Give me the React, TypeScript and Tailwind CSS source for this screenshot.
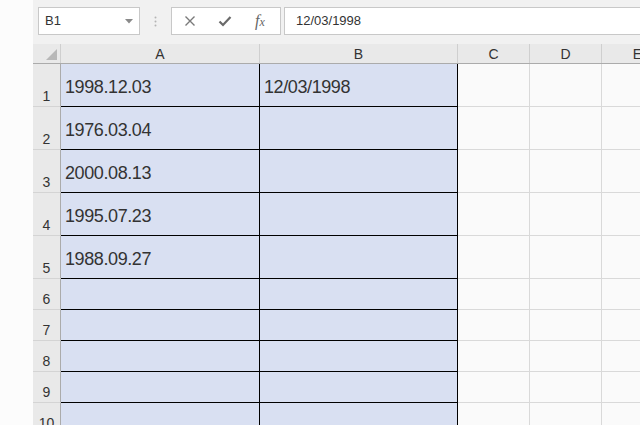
import React from "react";

const rows = [
  { n: 1, h: "h-[43px]", a: "1998.12.03", b: "12/03/1998" },
  { n: 2, h: "h-[43px]", a: "1976.03.04", b: "" },
  { n: 3, h: "h-[43px]", a: "2000.08.13", b: "" },
  { n: 4, h: "h-[43px]", a: "1995.07.23", b: "" },
  { n: 5, h: "h-[43px]", a: "1988.09.27", b: "" },
  { n: 6, h: "h-[31px]", a: "", b: "" },
  { n: 7, h: "h-[31px]", a: "", b: "" },
  { n: 8, h: "h-[31px]", a: "", b: "" },
  { n: 9, h: "h-[31px]", a: "", b: "" },
  { n: 10, h: "h-[31px]", a: "", b: "" },
];

const font = { fontFamily: '"Liberation Sans", Arial, sans-serif' };

export default function App() {
  return (
    <div className="flex w-[640px] h-[425px] overflow-hidden bg-[#fcfcfc]" style={font}>
      {/* left margin */}
      <div className="w-[33px] shrink-0 bg-[#fcfcfc]" />

      <div className="flex flex-col flex-1 min-w-0 bg-[#f1f1f1]">
        {/* Toolbar */}
        <div className="h-[44px] shrink-0 flex items-start pt-[7px] pl-[5px]">
          <div className="w-[102px] h-[28px] bg-white border border-[#c8c8c8] flex items-center justify-between pl-[6px] pr-[6px]">
            <span className="text-[13px] text-[#333]">B1</span>
            <svg width="8" height="5" viewBox="0 0 8 5">
              <path d="M0 0 L8 0 L4 4.5 Z" fill="#8a8a8a" />
            </svg>
          </div>
          <div className="w-[31px] h-[28px] flex items-center justify-center">
            <svg width="3" height="11" viewBox="0 0 3 11">
              <circle cx="1.5" cy="1.5" r="1" fill="#b4b4b4" />
              <circle cx="1.5" cy="5.5" r="1" fill="#b4b4b4" />
              <circle cx="1.5" cy="9.5" r="1" fill="#b4b4b4" />
            </svg>
          </div>
          <div className="w-[110px] h-[28px] bg-white border border-[#c8c8c8] flex items-center pl-[12px] gap-[22px]">
            <svg width="12" height="12" viewBox="0 0 12 12">
              <path d="M1.5 1.5 L10.5 10.5 M10.5 1.5 L1.5 10.5" stroke="#7a7a7a" strokeWidth="1.4" />
            </svg>
            <svg width="14" height="12" viewBox="0 0 14 12">
              <path d="M1.5 6.5 L5 10 L12.5 2" stroke="#6a6a6a" strokeWidth="2.2" fill="none" />
            </svg>
            <span className="text-[16px] italic text-[#666] ml-[1px] leading-none" style={{ fontFamily: '"Liberation Serif", serif' }}>
              f<span className="text-[12px]">x</span>
            </span>
          </div>
          <div className="ml-[3px] flex-1 h-[28px] bg-white border border-[#c8c8c8] border-r-0 flex items-center pl-[11px]">
            <span className="text-[13px] text-[#333]">12/03/1998</span>
          </div>
        </div>

        {/* Column headers */}
        <div className="flex h-[20px] shrink-0 bg-[#e9e9e9] border-b border-[#ababab]">
          <div className="w-[28px] shrink-0 border-r border-[#cfcfcf] flex items-end justify-end pr-[3px] pb-[3px]">
            <svg width="11" height="11" viewBox="0 0 11 11">
              <path d="M11 0 L11 11 L0 11 Z" fill="#b8b8b8" />
            </svg>
          </div>
          {[
            ["A", "w-[199px]"],
            ["B", "w-[198px]"],
            ["C", "w-[72px]"],
            ["D", "w-[72px]"],
            ["E", "w-[72px]"],
          ].map(([l, w]) => (
            <div key={l} className={`${w} shrink-0 border-r border-[#cfcfcf] flex items-end justify-center text-[14px] text-[#333] leading-none pb-[2px]`}>
              {l}
            </div>
          ))}
        </div>

        {/* Rows */}
        {rows.map((r) => (
          <div key={r.n} className={`flex ${r.h} shrink-0`}>
            <div className="w-[28px] shrink-0 bg-[#e9e9e9] border-r border-[#ababab] border-b border-b-[#d4d4d4] flex items-end justify-center text-[14px] text-[#333] leading-none pb-[3px]">
              {r.n}
            </div>
            <div className="w-[199px] shrink-0 bg-[#d9e0f2] border-r border-b border-black flex items-center pl-[4px] pt-[4px] text-[18px] tracking-[-0.4px] text-[#333]">
              {r.a}
            </div>
            <div className="w-[198px] shrink-0 bg-[#d9e0f2] border-r border-b border-black flex items-center pl-[4px] pt-[4px] text-[18px] tracking-[-0.4px] text-[#333]">
              {r.b}
            </div>
            <div className="w-[72px] shrink-0 bg-[#fafafa] border-r border-b border-[#d9d9d9]" />
            <div className="w-[72px] shrink-0 bg-[#fafafa] border-r border-b border-[#d9d9d9]" />
            <div className="w-[72px] shrink-0 bg-[#fafafa] border-r border-b border-[#d9d9d9]" />
          </div>
        ))}
      </div>
    </div>
  );
}
